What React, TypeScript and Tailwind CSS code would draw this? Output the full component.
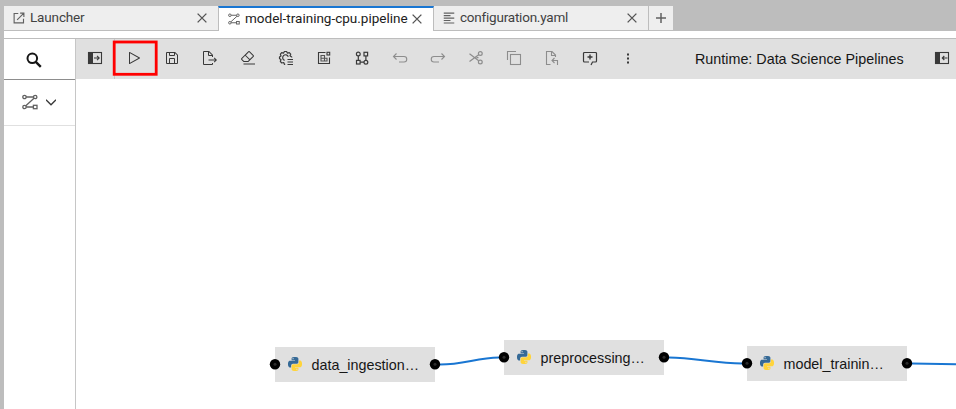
import type { ReactNode } from 'react';

type IconProps = { children: ReactNode; className?: string; size?: number };

/* Filled glyph on a 32-unit grid */
function Glyph({ children, className = 'text-[#393939]', size = 16 }: IconProps) {
  return (
    <svg viewBox="0 0 32 32" width={size} height={size} fill="currentColor" className={'shrink-0 ' + className}>
      {children}
    </svg>
  );
}

/* Outlined glyph on a 16-unit grid */
function Line({ children, className = 'text-[#393939]', size = 16 }: IconProps) {
  return (
    <svg viewBox="0 0 16 16" width={size} height={size} fill="none" stroke="currentColor" strokeWidth="1.1" className={'shrink-0 ' + className}>
      {children}
    </svg>
  );
}

function PipelineIcon({ size = 16 }: { size?: number }) {
  return (
    <Line size={size} className="text-[#616161]">
      <g strokeWidth="1.3">
        <circle cx="2.5" cy="3" r="1.7" />
        <circle cx="13.2" cy="3" r="1.7" />
        <circle cx="2.5" cy="13" r="1.7" />
        <rect x="11.4" y="11.3" width="3.6" height="3.4" />
        <path d="M4.2 3h7.3M12 4.3 3.8 11.8M4.2 13h7.2" />
      </g>
    </Line>
  );
}

function CloseIcon() {
  return (
    <Line className="text-[#555]" size={10}>
      <path d="M1 1 15 15M15 1 1 15" strokeWidth="2.2" />
    </Line>
  );
}

function PythonIcon() {
  const half =
    'M14.25.18l.9.2.73.26.59.3.45.32.34.34.25.34.16.33.1.3.04.26.02.2-.01.13V8.5l-.05.63-.13.55-.21.46-.26.38-.3.31-.33.25-.35.19-.35.14-.33.1-.3.07-.26.04-.21.02H8.77l-.69.05-.59.14-.5.22-.41.27-.33.32-.27.35-.2.36-.15.37-.1.35-.07.32-.04.27-.02.21v3.06H3.17l-.21-.03-.28-.07-.32-.12-.35-.18-.36-.26-.36-.36-.35-.46-.32-.59-.28-.73-.21-.88-.14-1.05-.05-1.23.06-1.22.16-1.04.24-.87.32-.71.36-.57.4-.44.42-.33.42-.24.4-.16.36-.1.32-.05.24-.01h.16l.06.01h8.16v-.83H6.18l-.01-2.75-.02-.37.05-.34.11-.31.17-.28.25-.26.31-.23.38-.2.44-.18.51-.15.58-.12.64-.1.71-.06.77-.04.84-.02 1.27.05zm-6.3 1.98l-.23.33-.08.41.08.41.23.34.33.22.41.09.41-.09.33-.22.23-.34.08-.41-.08-.41-.23-.33-.33-.22-.41-.09-.41.09z';
  return (
    <svg viewBox="0 0 24 24" width="14" height="14" className="-mt-px shrink-0">
      <path d={half} fill="#366a96" />
      <path d={half} fill="#ffd43b" transform="rotate(180 12 12)" />
    </svg>
  );
}

const muted = 'text-[#8d8d8d]';

const tools: { name: string; icon: ReactNode }[] = [
  {
    name: 'Run',
    icon: (
      <Glyph>
        <path d="M7,28a1,1,0,0,1-1-1V5a1,1,0,0,1,1.4819-.8763l20,11a1,1,0,0,1,0,1.7525l-20,11A1.0005,1.0005,0,0,1,7,28ZM8,6.6909V25.3088L24.9248,16Z" />
      </Glyph>
    ),
  },
  {
    name: 'Save',
    icon: (
      <Glyph>
        <path d="M27.71,9.29l-5-5A1,1,0,0,0,22,4H6A2,2,0,0,0,4,6V26a2,2,0,0,0,2,2H26a2,2,0,0,0,2-2V10A1,1,0,0,0,27.71,9.29ZM12,6h8v4H12Zm8,20H12V18h8Zm2,0V18a2,2,0,0,0-2-2H12a2,2,0,0,0-2,2v8H6V6h4v4a2,2,0,0,0,2,2h8a2,2,0,0,0,2-2V6.41l4,4V26Z" />
      </Glyph>
    ),
  },
  {
    name: 'Export',
    icon: (
      <Glyph>
        <path d="M13,21H26.17l-2.58,2.59L25,25l5-5-5-5-1.41,1.41L26.17,19H13z" />
        <path d="M22,14V10a1,1,0,0,0-.29-.71l-7-7A1,1,0,0,0,14,2H4A2,2,0,0,0,2,4V28a2,2,0,0,0,2,2H20a2,2,0,0,0,2-2V26H20v2H4V4h8v6a2,2,0,0,0,2,2h6v2Zm-8-4V4.41L19.59,10Z" />
      </Glyph>
    ),
  },
  {
    name: 'Clear',
    icon: (
      <Glyph>
        <path d="M7 27H30V29H7z" />
        <path d="M27.38,10.51,19.45,2.59a2,2,0,0,0-2.83,0l-14,14a2,2,0,0,0,0,2.83L7.13,24h9.59L27.38,13.34A2,2,0,0,0,27.38,10.51ZM15.89,22H8L4,18l6.31-6.31,7.93,7.92Zm3.76-3.76-7.92-7.93L18,4,26,11.93Z" />
      </Glyph>
    ),
  },
  {
    name: 'Runtime images',
    icon: (
      <Line>
        <path
          d="M7.200 14.300H6.400L5.700 12.500 3.700 13 2.300 11.300 3 9.700 1.500 8.500V6.900L3 5.900 2.400 4.200 3.700 2.700 5.500 3.200 6.400 1.500H8.600L9.500 3.200 11.300 2.700 12.700 4.200 12 5.800 13.700 7V7.600"
          strokeLinejoin="round"
          strokeWidth="1.200"
        />
        <path d="M6.600 10.400A2.900 2.900 0 1 1 10.300 6.700" strokeWidth="1.200" />
        <path d="M9.500 9.500h5.500M9.500 12h5.500M9.500 14.500h5.500" strokeWidth="1.200" />
      </Line>
    ),
  },
  {
    name: 'Open panel',
    icon: (
      <Line>
        <path d="M9.500 2.500h-7v11h11V7.500" />
        <rect x="11" y="2.300" width="2.700" height="2.700" />
        <path d="M5 5.500h3.500v5.500H5zM5 8.300h6v2.700H8.500" className="text-[#555]" />
      </Line>
    ),
  },
  {
    name: 'Components',
    icon: (
      <Line>
        <g strokeWidth="1.200">
          <circle cx="4.300" cy="4" r="1.900" />
          <rect x="10" y="2.300" width="3.600" height="3.600" />
          <rect x="2.500" y="10.400" width="3.600" height="3.600" />
          <circle cx="11.900" cy="12.200" r="1.900" />
          <path d="M4.300 5.900v4.500M11.900 5.900v4.400M6.100 12.200H10" />
        </g>
      </Line>
    ),
  },
  {
    name: 'Undo',
    icon: (
      <Line className={muted}>
        <path d="M4.500 3.500 1.500 6.500l3 3M1.500 6.500h10.500a2.500 2.500 0 0 1 0 5.500H7" />
      </Line>
    ),
  },
  {
    name: 'Redo',
    icon: (
      <Line className={muted}>
        <path d="M11.500 3.500l3 3-3 3M14.500 6.500H4a2.500 2.500 0 0 0 0 5.500h5" />
      </Line>
    ),
  },
  {
    name: 'Cut',
    icon: (
      <Line className={muted}>
        <g strokeWidth="1.200">
          <circle cx="12.300" cy="3.500" r="1.900" />
          <circle cx="12.300" cy="12" r="1.900" />
          <path d="M1.500 3.700 10.700 10.700M1.500 11.500 10.700 4.700M8.500 7.700h2" />
        </g>
      </Line>
    ),
  },
  {
    name: 'Copy',
    icon: (
      <Line className={muted}>
        <rect x="4.500" y="4.500" width="10" height="10" />
        <path d="M1.500 10V1.500H10" />
      </Line>
    ),
  },
  {
    name: 'Paste',
    icon: (
      <Line className={muted}>
        <path d="M6.500 14.500h-4v-13H8l3.500 3.500v2M7.500 1.500v4h4M10.500 8 8 10.500l2.500 2.500M8 10.500h5.500v4.500" />
      </Line>
    ),
  },
  {
    name: 'Comment',
    icon: (
      <Line>
        <path d="M9 15l1.500-3h3a1 1 0 0 0 1-1V3.500a1 1 0 0 0-1-1h-11a1 1 0 0 0-1 1V11a1 1 0 0 0 1 1H7" strokeWidth="1.200" />
        <path d="M8 4.500v5M5.500 7h5" strokeWidth="1.400" />
      </Line>
    ),
  },
  {
    name: 'More',
    icon: (
      <Line>
        <path d="M8 3.500v2M8 7.500v2M8 11.500v2" strokeWidth="2" />
      </Line>
    ),
  },
];

function PanelIcon({ flip = false }: { flip?: boolean }) {
  return (
    <Line>
      <rect x="1.500" y="2.500" width="13" height="11" />
      <rect x="1" y="2" width="5" height="12" fill="currentColor" stroke="none" />
      {flip ? <path d="M13.500 8h-5M10.300 6 8.300 8l2 2" /> : <path d="M7 8h4.500M10 5.800 12.200 8 10 10.200" />}
    </Line>
  );
}

function PipelineNode({ label, place }: { label: string; place: string }) {
  return (
    <div className={'absolute flex h-[35px] w-[160px] items-center bg-[#e0e0e0] pl-[13px] ' + place}>
      <PythonIcon />
      <span className="ml-[9.5px] whitespace-nowrap text-[14.33px] leading-5 text-[#161616]">{label}</span>
      <svg className="absolute inset-0 overflow-visible" width="160" height="35">
        <circle cx="0" cy="17.300" r="5.200" />
        <circle cx="0" cy="17.300" r="1.500" fill="#2a2a2a" />
        <circle cx="160" cy="17.300" r="5.200" />
        <circle cx="160" cy="17.300" r="1.500" fill="#2a2a2a" />
      </svg>
    </div>
  );
}

export default function App() {
  return (
    <div className="flex h-[409px] w-[956px] flex-col overflow-hidden bg-[#bdbdbd] pl-1 font-['Liberation_Sans',Arial,sans-serif]">
      <div className="flex h-[31px] shrink-0 pt-1.5 font-['Roboto','Noto_Sans',sans-serif] text-[13.5px] text-[#424242]">
        <div className="flex w-[214px] items-center border-b border-[#bdbdbd] bg-[#eee] pr-[11px] pb-px pl-[9px]">
          <Line size={12} className="text-[#616161]">
            <path d="M7 2H1.500v12.500H14V9M9.500 1.500h5v5M14.500 1.500 5.500 10.500" strokeWidth="1.500" />
          </Line>
          <span className="ml-[5px] flex-1 tracking-[-0.15px]">Launcher</span>
          <CloseIcon />
        </div>
        <div className="flex w-[216px] items-center border-x border-t-2 border-x-[#bdbdbd] border-t-[#1976d2] bg-white pb-0.5 pl-[9px] text-[#212121]">
          <PipelineIcon size={12} />
          <span className="ml-[5px] w-[167px] whitespace-nowrap">model-training-cpu.pipeline</span>
          <CloseIcon />
        </div>
        <div className="flex w-[214px] items-center border-b border-[#bdbdbd] bg-[#eee] pr-[11px] pb-px pl-[9px]">
          <Line size={12} className="text-[#616161]">
            <path d="M1 1.500h14M1 4.800h9M1 8.100h14M1 11.400h9M1 14.700h14" strokeWidth="1.500" />
          </Line>
          <span className="ml-[5px] flex-1 tracking-[-0.22px]">configuration.yaml</span>
          <CloseIcon />
        </div>
        <div className="flex w-[25px] items-center justify-center border-b border-l border-[#bdbdbd] bg-[#eee]">
          <Line size={10} className="text-[#616161]">
            <path d="M8 0v16M0 8h16" strokeWidth="2.400" />
          </Line>
        </div>
      </div>
      <div className="h-2 shrink-0 border-b border-[#bdbdbd] bg-white" />
      <div className="flex min-h-0 flex-1 bg-white">
        <aside className="w-[72px] shrink-0 border-r border-[#c6c6c6]">
          <div className="flex h-[41px] items-center border-b border-[#8d8d8d] pt-px pl-[22px]">
            <Line size={16} className="text-[#161616]">
              <circle cx="6.300" cy="6.300" r="4.800" strokeWidth="2" />
              <path d="m9.800 9.800 5 5" strokeWidth="2.400" />
            </Line>
          </div>
          <div className="flex h-[46px] items-center gap-2 border-b border-[#e0e0e0] pb-px pl-[18px]">
            <PipelineIcon />
            <Line size={10} className="text-[#393939]">
              <path d="m0 4.500 8 8 8-8" strokeWidth="2" />
            </Line>
          </div>
        </aside>
        <main className="flex min-w-0 flex-1 flex-col">
          <div className="relative flex h-10 shrink-0 items-center bg-[#e0e0e0]">
            <div className="flex h-full w-[39px] items-center justify-center border-r border-[#c6c6c6] pb-0.5">
              <PanelIcon />
            </div>
            {tools.map((tool) => (
              <div key={tool.name} className="flex h-full w-[38px] items-center justify-center pb-0.5">
                {tool.icon}
              </div>
            ))}
            <span className="ml-[48px] w-[239px] pt-0.5 whitespace-nowrap text-[14.33px] text-[#161616]">Runtime: Data Science Pipelines</span>
            <div className="pb-0.5">
              <PanelIcon flip />
            </div>
            <svg className="absolute top-0 left-9" width="48" height="40" fill="none">
              <rect x="2.200" y="3" width="42" height="32.300" stroke="#f00" strokeWidth="2.800" />
            </svg>
          </div>
          <div className="relative min-h-0 flex-1 overflow-hidden bg-white">
            <svg className="absolute inset-0" width="880" height="330" fill="none" stroke="#1976d2" strokeWidth="2">
              <path d="M364 285.500C388 285.500 400 279 423 278.500M593 278.500C618 279 640 284 666 284.500M836 284.500 880 285.300" />
            </svg>
            <PipelineNode label="data_ingestion…" place="left-[199px] top-[268px]" />
            <PipelineNode label="preprocessing…" place="left-[428px] top-[261px]" />
            <PipelineNode label="model_trainin…" place="left-[671px] top-[267px]" />
          </div>
        </main>
      </div>
    </div>
  );
}
